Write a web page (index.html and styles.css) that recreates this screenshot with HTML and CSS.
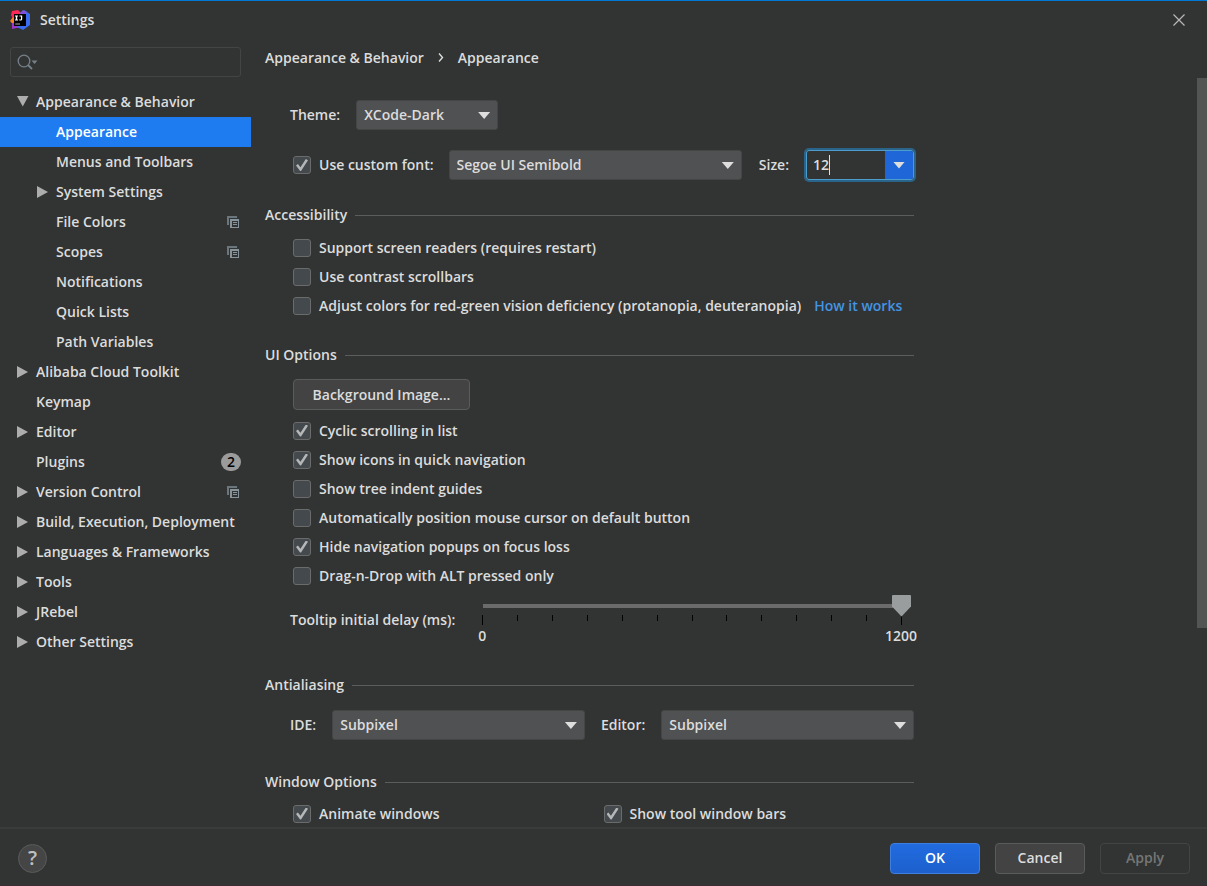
FILE: index.html
```html
<!DOCTYPE html>
<html lang="en">
<head>
    <meta charset="UTF-8">
    <meta name="viewport" content="width=device-width, initial-scale=1.0">
    <title>Settings</title>
    <link rel="stylesheet" href="styles.css">
</head>
<body>
    <svg class="sprite" width="0" height="0" aria-hidden="true">
        <symbol id="arrow-right" viewBox="0 0 12 12"><path d="M0 0L11 6L0 12Z" fill="#adadad"/></symbol>
        <symbol id="arrow-down" viewBox="0 0 12 12"><path d="M0 0H11.5L5.75 10.5Z" fill="#adadad"/></symbol>
        <symbol id="project" viewBox="0 0 12 12">
            <path d="M0 0H10V2H2V9H0Z" fill="#6c777d"/>
            <path d="M3 3H12V12H3Z" fill="#87939a"/>
            <path d="M5 5H11V11H5Z" fill="#323433"/>
            <path d="M6 6H10V7H6ZM6 8H10V9H6Z" fill="#87939a"/>
        </symbol>
    </svg>

    <header class="titlebar">
        <svg class="logo" width="20" height="20" viewBox="0 0 20 20" aria-hidden="true">
            <path d="M2 1L8 0L11 3L9 10L1 13L2.5 8L1 5Z" fill="#fe2857"/>
            <path d="M0 11L3 7L6 9L4 15Z" fill="#fc801d"/>
            <path d="M2 13L9 13L14 17L9 17.5L2 19Z" fill="#9c37c9"/>
            <path d="M10 3L14 0L20 4V15L13 20L7 17L12 10Z" fill="#3b6cf0"/>
            <path d="M10 3L13 0L17 2L13 7L9 6Z" fill="#8150d8"/>
            <path d="M4 4H16V16H4Z" fill="#000"/>
            <path d="M5 5.5H8V6.5H7.2V9.5H8V10.5H5V9.5H5.8V6.5H5ZM9.5 5.5H12.2V9.2Q12.2 10.6 10.6 10.6Q9.5 10.6 9 9.9L9.8 9.2Q10.9 9.8 11 9V6.5H9.5Z" fill="#fff"/>
            <path d="M5.3 13.5H10V14.5H5.3Z" fill="#aaa"/>
        </svg>
        <h1 class="title">Settings</h1>
        <button class="close" type="button" aria-label="Close">
            <svg width="12" height="12" viewBox="0 0 12 12"><path d="M0.5 0.5L11.5 11.5M11.5 0.5L0.5 11.5" stroke="#b8b8b8" stroke-width="1.2"/></svg>
        </button>
    </header>

    <div class="main">
        <aside class="sidebar">
            <label class="search">
                <svg width="22" height="16" viewBox="0 0 22 16" aria-hidden="true">
                    <circle cx="7" cy="7" r="5.8" fill="none" stroke="#76808a" stroke-width="1.3"/>
                    <path d="M11 11L15 15" stroke="#76808a" stroke-width="1.8"/>
                    <path d="M14.5 6.5H20.5L17.5 10Z" fill="#76808a"/>
                </svg>
                <input type="text" aria-label="Search settings">
            </label>
            <nav>
                <ul class="tree">
                    <li><a href="#"><svg class="arrow"><use href="#arrow-down"/></svg>Appearance &amp; Behavior</a>
                        <ul>
                            <li><a class="selected" href="#"><span class="arrow"></span>Appearance</a></li>
                            <li><a href="#"><span class="arrow"></span>Menus and Toolbars</a></li>
                            <li><a href="#"><svg class="arrow"><use href="#arrow-right"/></svg>System Settings</a></li>
                            <li><a href="#"><span class="arrow"></span>File Colors<svg class="mark"><use href="#project"/></svg></a></li>
                            <li><a href="#"><span class="arrow"></span>Scopes<svg class="mark"><use href="#project"/></svg></a></li>
                            <li><a href="#"><span class="arrow"></span>Notifications</a></li>
                            <li><a href="#"><span class="arrow"></span>Quick Lists</a></li>
                            <li><a href="#"><span class="arrow"></span>Path Variables</a></li>
                        </ul>
                    </li>
                    <li><a href="#"><svg class="arrow"><use href="#arrow-right"/></svg>Alibaba Cloud Toolkit</a></li>
                    <li><a href="#"><span class="arrow"></span>Keymap</a></li>
                    <li><a href="#"><svg class="arrow"><use href="#arrow-right"/></svg>Editor</a></li>
                    <li><a href="#"><span class="arrow"></span>Plugins<span class="count">2</span></a></li>
                    <li><a href="#"><svg class="arrow"><use href="#arrow-right"/></svg>Version Control<svg class="mark"><use href="#project"/></svg></a></li>
                    <li><a href="#"><svg class="arrow"><use href="#arrow-right"/></svg>Build, Execution, Deployment</a></li>
                    <li><a href="#"><svg class="arrow"><use href="#arrow-right"/></svg>Languages &amp; Frameworks</a></li>
                    <li><a href="#"><svg class="arrow"><use href="#arrow-right"/></svg>Tools</a></li>
                    <li><a href="#"><svg class="arrow"><use href="#arrow-right"/></svg>JRebel</a></li>
                    <li><a href="#"><svg class="arrow"><use href="#arrow-right"/></svg>Other Settings</a></li>
                </ul>
            </nav>
        </aside>

        <main class="content">
            <div class="breadcrumb">
                <span>Appearance &amp; Behavior</span>
                <svg width="6" height="10" viewBox="0 0 6 10" aria-hidden="true"><path d="M1 0.5L4.5 4.5L1 8.5" fill="none" stroke="#dcdcdc" stroke-width="1.4"/></svg>
                <span>Appearance</span>
            </div>
            <div class="viewport">
                <form class="page">
                    <div class="row">
                        <label for="theme">Theme:</label>
                        <span class="select theme">
                            <select id="theme"><option>XCode-Dark</option></select>
                        </span>
                    </div>
                    <div class="row font-row">
                        <label class="check"><input type="checkbox" checked>Use custom font:</label>
                        <span class="select grow">
                            <select aria-label="Font"><option>Segoe UI Semibold</option></select>
                        </span>
                        <label class="size-label" for="size">Size:</label>
                        <span class="combo">
                            <input type="text" id="size" value="12">
                            <span class="caret"></span>
                            <button type="button" aria-label="Font sizes"></button>
                        </span>
                    </div>

                    <h2>Accessibility</h2>
                    <div class="checks">
                        <label class="check"><input type="checkbox">Support screen readers (requires restart)</label>
                        <label class="check"><input type="checkbox">Use contrast scrollbars</label>
                        <div class="with-link">
                            <label class="check"><input type="checkbox">Adjust colors for red-green vision deficiency (protanopia, deuteranopia)</label>
                            <a href="#">How it works</a>
                        </div>
                    </div>

                    <h2>UI Options</h2>
                    <button class="button background" type="button">Background Image...</button>
                    <div class="checks">
                        <label class="check"><input type="checkbox" checked>Cyclic scrolling in list</label>
                        <label class="check"><input type="checkbox" checked>Show icons in quick navigation</label>
                        <label class="check"><input type="checkbox">Show tree indent guides</label>
                        <label class="check"><input type="checkbox">Automatically position mouse cursor on default button</label>
                        <label class="check"><input type="checkbox" checked>Hide navigation popups on focus loss</label>
                        <label class="check"><input type="checkbox">Drag-n-Drop with ALT pressed only</label>
                    </div>
                    <div class="delay">
                        <label for="delay">Tooltip initial delay (ms):</label>
                        <div class="slider">
                            <input type="range" id="delay" min="0" max="1200" value="1200">
                            <div class="ticks">
                                <i></i><i></i><i></i><i></i><i></i><i></i><i></i><i></i><i></i><i></i><i></i><i></i><i></i>
                            </div>
                            <div class="scale"><span>0</span><span>1200</span></div>
                        </div>
                    </div>

                    <h2>Antialiasing</h2>
                    <div class="row antialiasing">
                        <label for="ide">IDE:</label>
                        <span class="select grow"><select id="ide"><option>Subpixel</option></select></span>
                        <label for="editor">Editor:</label>
                        <span class="select grow"><select id="editor"><option>Subpixel</option></select></span>
                    </div>

                    <h2 class="window-options">Window Options</h2>
                    <div class="checks two">
                        <label class="check"><input type="checkbox" checked>Animate windows</label>
                        <label class="check"><input type="checkbox" checked>Show tool window bars</label>
                    </div>
                </form>
                <div class="scrollbar"><div class="thumb"></div></div>
            </div>
        </main>
    </div>

    <footer class="footer">
        <button class="help" type="button" aria-label="Help">?</button>
        <button class="button primary" type="submit">OK</button>
        <button class="button" type="button">Cancel</button>
        <button class="button" type="button" disabled>Apply</button>
    </footer>
</body>
</html>
```
FILE: styles.css
```css
* {
    box-sizing: border-box;
}
body {
    display: flex;
    flex-direction: column;
    height: 100vh;
    margin: 0;
    overflow: hidden;
    border-top: 1px solid #0078d7;
    border-bottom: 1px solid #3a2c33;
    background-color: #323433;
    color: #dcdcdc;
    font: 600 14px/20px "Open Sans", "Noto Sans", sans-serif;
}
button, input, select {
    font: inherit;
    color: inherit;
}
.sprite {
    position: absolute;
}

/* title bar */
.titlebar {
    display: flex;
    align-items: center;
    height: 37px;
    padding: 0 22px 0 10px;
}
.title {
    flex: 1;
    margin: 0 0 0 10px;
    font-size: 14px;
    font-weight: 600;
}
.close {
    display: flex;
    padding: 0;
    border: none;
    background: none;
}

.main {
    display: flex;
    flex: 1;
    min-height: 0;
}

/* sidebar */
.sidebar {
    width: 251px;
    padding-top: 9px;
}
.search {
    display: flex;
    align-items: center;
    height: 30px;
    margin: 0 10px 10px;
    padding: 0 6px;
    border: 1px solid #434545;
    border-radius: 3px;
}
.search input {
    flex: 1;
    min-width: 0;
    border: none;
    outline: none;
    background: none;
}
.tree, .tree ul {
    margin: 0;
    padding: 0;
    list-style: none;
}
.tree a {
    display: flex;
    align-items: center;
    height: 30px;
    padding: 0 12px 0 17px;
    color: inherit;
    line-height: 22px;
    text-decoration: none;
    white-space: nowrap;
}
.tree ul a {
    padding-left: 37px;
}
.tree .selected {
    background-color: #1e7bf0;
    color: #fff;
}
.arrow {
    width: 12px;
    height: 12px;
    margin-right: 7px;
}
.mark {
    width: 12px;
    height: 12px;
    margin-left: auto;
}
.count {
    width: 20px;
    height: 18px;
    margin: 0 -2px 0 auto;
    border-radius: 9px;
    background-color: #9b9b9b;
    color: #000;
    line-height: 18px;
    text-align: center;
}

/* content */
.content {
    display: flex;
    flex: 1;
    flex-direction: column;
    min-width: 0;
}
.breadcrumb {
    display: flex;
    align-items: center;
    gap: 14px;
    height: 40px;
    padding-left: 14px;
}
.viewport {
    display: flex;
    flex: 1;
    justify-content: space-between;
    min-height: 0;
    overflow: hidden;
}
.page {
    flex: 1;
    max-width: 663px;
    padding: 22px 0 0 14px;
}
.scrollbar {
    width: 10px;
}
.thumb {
    height: 550px;
    background-color: #535554;
}
.row {
    display: flex;
    align-items: center;
    height: 30px;
    padding-left: 25px;
}
.font-row {
    margin-top: 20px;
    padding-left: 28px;
}
h2 {
    display: flex;
    align-items: center;
    gap: 8px;
    margin: 25px 0 8px;
    font-size: 14px;
    font-weight: 600;
}
h2::after {
    content: "";
    flex: 1;
    height: 1px;
    background-color: #5b5d5c;
}
.page a {
    color: #4294e4;
    text-decoration: none;
}

/* check boxes */
.checks {
    display: flex;
    flex-direction: column;
    padding-left: 28px;
}
.check {
    display: flex;
    align-items: center;
    gap: 8px;
    height: 29px;
    white-space: nowrap;
}
.check input {
    display: grid;
    place-items: center;
    width: 18px;
    height: 18px;
    margin: 0;
    appearance: none;
    border: 1px solid #6b6b6b;
    border-radius: 3px;
    background-color: #43494c;
}
.check input:checked::after {
    content: "";
    width: 12px;
    height: 12px;
    background-color: #b4b6b7;
    clip-path: polygon(0 54%, 16% 42%, 37% 68%, 82% 0, 100% 10%, 42% 100%, 34% 100%);
}
.with-link {
    display: flex;
    align-items: center;
    gap: 13px;
}
.two {
    display: grid;
    grid-template-columns: 1fr 1fr;
}

/* drop-downs */
.select {
    position: relative;
    display: flex;
}
.select select {
    width: 100%;
    height: 30px;
    padding: 0 30px 0 7px;
    appearance: none;
    border: 1px solid #444646;
    border-radius: 3px;
    background-color: #505153;
}
.select::after, .combo button::after {
    content: "";
    width: 12px;
    height: 7px;
    background-color: #dedede;
    clip-path: polygon(0 0, 100% 0, 50% 100%);
}
.select::after {
    position: absolute;
    top: 12px;
    right: 8px;
    pointer-events: none;
}
.grow {
    flex: 1;
}
.theme {
    width: 142px;
    margin-left: 16px;
}
.font-row .select {
    margin: 0 17px 0 15px;
}
.size-label {
    margin-right: 17px;
}
.combo {
    position: relative;
    display: flex;
    width: 108px;
    height: 30px;
    border: 1px solid #4c9dcb;
    border-radius: 3px;
    box-shadow: 0 0 0 2px #2a648b;
}
.combo input {
    flex: 1;
    min-width: 0;
    padding: 0 6px;
    border: none;
    outline: none;
    background: none;
    caret-color: transparent;
}
.combo button {
    display: grid;
    place-items: center;
    width: 28px;
    padding: 0;
    border: none;
    border-radius: 0 2px 2px 0;
    background-color: #1f66d8;
}
.caret {
    position: absolute;
    top: 4px;
    left: 22px;
    width: 1px;
    height: 20px;
    background-color: #dfdfdf;
}

/* tooltip delay slider */
.delay {
    display: flex;
    align-items: center;
    height: 60px;
    padding: 0 3px 0 25px;
}
.slider {
    flex: 1;
    margin-left: 18px;
}
.slider input {
    position: relative;
    display: block;
    width: 100%;
    height: 22px;
    margin: 0;
    appearance: none;
    background: linear-gradient(#6b6b6b, #6b6b6b) no-repeat center / calc(100% - 19px) 4px;
}
.slider input::-webkit-slider-thumb {
    width: 19px;
    height: 22px;
    appearance: none;
    background-color: #9a9d9e;
    clip-path: polygon(0 5%, 5% 0, 95% 0, 100% 5%, 100% 55%, 50% 100%, 0 55%);
}
.ticks {
    display: flex;
    justify-content: space-between;
    height: 10px;
    margin: -2px 9px 0;
}
.ticks i {
    width: 1px;
    height: 6px;
    background-color: #000;
}
.ticks i:first-child, .ticks i:last-child {
    height: 10px;
}
.scale {
    display: flex;
    justify-content: space-between;
    margin: 1px -6px 0 5px;
}

.antialiasing {
    gap: 16px;
    margin-top: 15px;
}
.window-options {
    margin: 32px 0 7px;
}

/* buttons */
.button {
    width: 90px;
    height: 31px;
    padding: 0;
    border: 1px solid #5a5b5b;
    border-radius: 4px;
    background-color: #434343;
}
.button:disabled {
    border-color: #434544;
    background: none;
    color: #757776;
}
.background {
    display: block;
    width: 177px;
    margin: 14px 0 6px 28px;
}
.primary {
    border-color: #3f7fe0;
    background: linear-gradient(#216be0, #1d60cd);
    color: #fff;
}
.footer {
    display: flex;
    align-items: center;
    gap: 15px;
    height: 58px;
    padding: 2px 17px 0 18px;
    border-top: 2px solid #3a3c3b;
}
.help {
    width: 29px;
    height: 29px;
    margin-right: auto;
    padding: 0;
    border: 1px solid #5a5b5b;
    border-radius: 50%;
    background-color: #454545;
    color: #c0c0c0;
    font-size: 20px;
    font-weight: 600;
}
```
